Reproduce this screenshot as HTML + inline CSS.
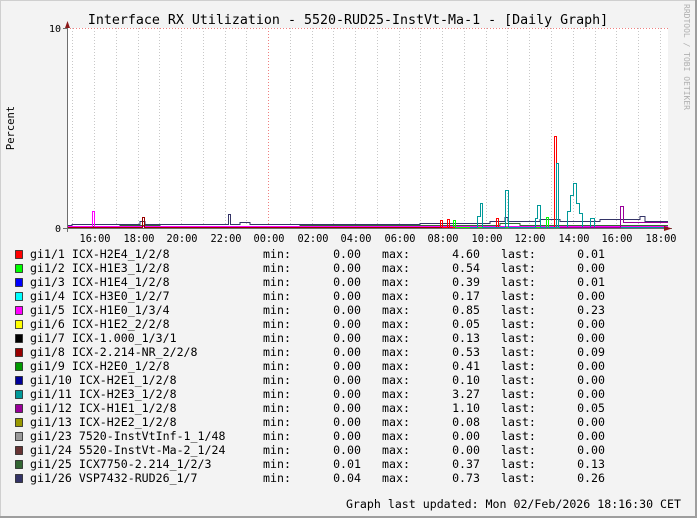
<!DOCTYPE html>
<html><head><meta charset="utf-8"><style>
html,body{margin:0;padding:0;background:#f3f3f3}
svg{display:block}
text{font-family:"DejaVu Sans Mono","Liberation Mono",monospace}
</style></head><body>
<svg width="697" height="518" viewBox="0 0 697 518" xmlns="http://www.w3.org/2000/svg">
<rect x="0" y="0" width="697" height="518" fill="#f3f3f3"/>
<rect x="0.5" y="0.5" width="696" height="517" fill="none" stroke="#cfcfcf"/>
<rect x="695" y="0" width="2" height="518" fill="#9e9e9e"/>
<rect x="0" y="516" width="697" height="2" fill="#9e9e9e"/>
<rect x="67" y="28" width="601" height="200" fill="#ffffff"/>
<g shape-rendering="crispEdges">
<path d="M72.5 28V228M94.5 28V228M116.5 28V228M138.5 28V228M159.5 28V228M181.5 28V228M203.5 28V228M225.5 28V228M246.5 28V228M290.5 28V228M312.5 28V228M333.5 28V228M355.5 28V228M377.5 28V228M399.5 28V228M420.5 28V228M442.5 28V228M464.5 28V228M486.5 28V228M507.5 28V228M529.5 28V228M551.5 28V228M573.5 28V228M595.5 28V228M616.5 28V228M638.5 28V228M660.5 28V228" stroke="#c8c8c8" stroke-dasharray="1,2" stroke-width="1"/>
<path d="M268.5 28V228M67 28.5H668" stroke="#f08080" stroke-dasharray="1,2" stroke-width="1"/>
<polyline fill="none" stroke="#333366" stroke-width="1" points="67,225.5 72,225.5 72,224.5 140,224.5 140,221.5 145,221.5 145,224.5 228.5,224.5 228.5,214.5 230.5,214.5 230.5,224.5 240,224.5 240,222.5 250,222.5 250,224.5 420,224.5 420,223.5 490,223.5 490,221.5 505,221.5 505,217.5 508,217.5 508,221.5 540,221.5 540,219.5 560,219.5 560,221.5 600,221.5 600,219.5 640,219.5 640,216.5 645,216.5 645,221.5 668,221.5"/>
<polyline fill="none" stroke="#336633" stroke-width="1" points="67,226.5 120,226.5 120,225.5 160,225.5 160,226.5 300,226.5 300,225.5 500,225.5 500,223.5 520,223.5 520,225.5 668,225.5"/>
<polyline fill="none" stroke="#ff00ff" stroke-width="1" points="67,226.5 92.5,226.5 92.5,211.5 94.5,211.5 94.5,226.5 668,226.5"/>
<polyline fill="none" stroke="#990000" stroke-width="1" points="67,227.5 142.5,227.5 142.5,217.5 144.5,217.5 144.5,227.5 668,227.5"/>
<polyline fill="none" stroke="#ff0000" stroke-width="1" points="440.5,227.5 440.5,220.5 442.5,220.5 442.5,227.5 447.5,227.5 447.5,219.5 449.5,219.5 449.5,227.5 496.5,227.5 496.5,218.5 498.5,218.5 498.5,227.5 554.5,227.5 554.5,136.5 556.5,136.5 556.5,227.5 668,227.5"/>
<polyline fill="none" stroke="#00ff00" stroke-width="1" points="453.5,227.5 453.5,220.5 455.5,220.5 455.5,227.5 546.5,227.5 546.5,217.5 548.5,217.5 548.5,227.5 668,227.5"/>
<polyline fill="none" stroke="#009999" stroke-width="1" points="470,227.5 477.5,227.5 477.5,216.5 480.5,216.5 480.5,203.5 482.5,203.5 482.5,227.5 505.5,227.5 505.5,190.5 508.5,190.5 508.5,227.5 535.5,227.5 535.5,218.5 537.5,218.5 537.5,205.5 540.5,205.5 540.5,227.5 556.5,227.5 556.5,163.5 558.5,163.5 558.5,227.5 567.5,227.5 567.5,211.5 570.5,211.5 570.5,195.5 573.5,195.5 573.5,183.5 576.5,183.5 576.5,203.5 579.5,203.5 579.5,213.5 582.5,213.5 582.5,227.5 590.5,227.5 590.5,218.5 594.5,218.5 594.5,227.5 668,227.5"/>
<polyline fill="none" stroke="#990099" stroke-width="1" points="560,227.5 620.5,227.5 620.5,206.5 623.5,206.5 623.5,222.5 668,222.5"/>
<line x1="67" y1="228.5" x2="672" y2="228.5" stroke="#6e6e6e"/>
<line x1="67.5" y1="24" x2="67.5" y2="232" stroke="#6e6e6e"/>
<path d="M63 28.5H67M63 228.5H67" stroke="#6e6e6e"/>
</g>
<polygon points="664,226 672,228.5 664,231" fill="#8b1a1a"/>
<polygon points="65,28 67.5,21 70,28" fill="#8b1a1a"/>
<text x="348" y="24" font-size="13.3" text-anchor="middle" fill="#000">Interface RX Utilization - 5520-RUD25-InstVt-Ma-1 - [Daily Graph]</text>
<text x="61" y="32" font-size="10" text-anchor="end">10</text>
<text x="61" y="232" font-size="10" text-anchor="end">0</text>
<text transform="translate(14,128) rotate(-90)" font-size="10.5" text-anchor="middle">Percent</text>
<text transform="translate(684,4) rotate(90)" font-size="8" fill="#b0b0b0">RRDTOOL / TOBI OETIKER</text>
<g font-size="10.3" text-anchor="middle">
<text x="95" y="242">16:00</text><text x="139" y="242">18:00</text><text x="182" y="242">20:00</text><text x="226" y="242">22:00</text><text x="269" y="242">00:00</text><text x="313" y="242">02:00</text><text x="356" y="242">04:00</text><text x="400" y="242">06:00</text><text x="443" y="242">08:00</text><text x="487" y="242">10:00</text><text x="530" y="242">12:00</text><text x="574" y="242">14:00</text><text x="617" y="242">16:00</text><text x="661" y="242">18:00</text>
</g>
<g font-size="11.6">
<g stroke="#222" stroke-width="0.8">
<rect x="15.5" y="250.5" width="7" height="8" fill="#ff0000"/>
<rect x="15.5" y="264.5" width="7" height="8" fill="#00ff00"/>
<rect x="15.5" y="278.5" width="7" height="8" fill="#0000ff"/>
<rect x="15.5" y="292.5" width="7" height="8" fill="#00ffff"/>
<rect x="15.5" y="306.5" width="7" height="8" fill="#ff00ff"/>
<rect x="15.5" y="320.5" width="7" height="8" fill="#ffff00"/>
<rect x="15.5" y="334.5" width="7" height="8" fill="#000000"/>
<rect x="15.5" y="348.5" width="7" height="8" fill="#990000"/>
<rect x="15.5" y="362.5" width="7" height="8" fill="#009900"/>
<rect x="15.5" y="376.5" width="7" height="8" fill="#000099"/>
<rect x="15.5" y="390.5" width="7" height="8" fill="#009999"/>
<rect x="15.5" y="404.5" width="7" height="8" fill="#990099"/>
<rect x="15.5" y="418.5" width="7" height="8" fill="#999900"/>
<rect x="15.5" y="432.5" width="7" height="8" fill="#999999"/>
<rect x="15.5" y="446.5" width="7" height="8" fill="#663333"/>
<rect x="15.5" y="460.5" width="7" height="8" fill="#336633"/>
<rect x="15.5" y="474.5" width="7" height="8" fill="#333366"/>
</g>
<g>
<text x="30" y="258">gi1/1 ICX-H2E4_1/2/8</text>
<text x="30" y="272">gi1/2 ICX-H1E3_1/2/8</text>
<text x="30" y="286">gi1/3 ICX-H1E4_1/2/8</text>
<text x="30" y="300">gi1/4 ICX-H3E0_1/2/7</text>
<text x="30" y="314">gi1/5 ICX-H1E0_1/3/4</text>
<text x="30" y="328">gi1/6 ICX-H1E2_2/2/8</text>
<text x="30" y="342">gi1/7 ICX-1.000_1/3/1</text>
<text x="30" y="356">gi1/8 ICX-2.214-NR_2/2/8</text>
<text x="30" y="370">gi1/9 ICX-H2E0_1/2/8</text>
<text x="30" y="384">gi1/10 ICX-H2E1_1/2/8</text>
<text x="30" y="398">gi1/11 ICX-H2E3_1/2/8</text>
<text x="30" y="412">gi1/12 ICX-H1E1_1/2/8</text>
<text x="30" y="426">gi1/13 ICX-H2E2_1/2/8</text>
<text x="30" y="440">gi1/23 7520-InstVtInf-1_1/48</text>
<text x="30" y="454">gi1/24 5520-InstVt-Ma-2_1/24</text>
<text x="30" y="468">gi1/25 ICX7750-2.214_1/2/3</text>
<text x="30" y="482">gi1/26 VSP7432-RUD26_1/7</text>
</g>
<g>
<text x="263" y="258">min:</text><text x="263" y="272">min:</text><text x="263" y="286">min:</text><text x="263" y="300">min:</text><text x="263" y="314">min:</text><text x="263" y="328">min:</text><text x="263" y="342">min:</text><text x="263" y="356">min:</text><text x="263" y="370">min:</text><text x="263" y="384">min:</text><text x="263" y="398">min:</text><text x="263" y="412">min:</text><text x="263" y="426">min:</text><text x="263" y="440">min:</text><text x="263" y="454">min:</text><text x="263" y="468">min:</text><text x="263" y="482">min:</text>
<text x="382" y="258">max:</text><text x="382" y="272">max:</text><text x="382" y="286">max:</text><text x="382" y="300">max:</text><text x="382" y="314">max:</text><text x="382" y="328">max:</text><text x="382" y="342">max:</text><text x="382" y="356">max:</text><text x="382" y="370">max:</text><text x="382" y="384">max:</text><text x="382" y="398">max:</text><text x="382" y="412">max:</text><text x="382" y="426">max:</text><text x="382" y="440">max:</text><text x="382" y="454">max:</text><text x="382" y="468">max:</text><text x="382" y="482">max:</text>
<text x="501" y="258">last:</text><text x="501" y="272">last:</text><text x="501" y="286">last:</text><text x="501" y="300">last:</text><text x="501" y="314">last:</text><text x="501" y="328">last:</text><text x="501" y="342">last:</text><text x="501" y="356">last:</text><text x="501" y="370">last:</text><text x="501" y="384">last:</text><text x="501" y="398">last:</text><text x="501" y="412">last:</text><text x="501" y="426">last:</text><text x="501" y="440">last:</text><text x="501" y="454">last:</text><text x="501" y="468">last:</text><text x="501" y="482">last:</text>
</g>
<g text-anchor="end">
<text x="361" y="258">0.00</text><text x="361" y="272">0.00</text><text x="361" y="286">0.00</text><text x="361" y="300">0.00</text><text x="361" y="314">0.00</text><text x="361" y="328">0.00</text><text x="361" y="342">0.00</text><text x="361" y="356">0.00</text><text x="361" y="370">0.00</text><text x="361" y="384">0.00</text><text x="361" y="398">0.00</text><text x="361" y="412">0.00</text><text x="361" y="426">0.00</text><text x="361" y="440">0.00</text><text x="361" y="454">0.00</text><text x="361" y="468">0.01</text><text x="361" y="482">0.04</text>
<text x="480" y="258">4.60</text><text x="480" y="272">0.54</text><text x="480" y="286">0.39</text><text x="480" y="300">0.17</text><text x="480" y="314">0.85</text><text x="480" y="328">0.05</text><text x="480" y="342">0.13</text><text x="480" y="356">0.53</text><text x="480" y="370">0.41</text><text x="480" y="384">0.10</text><text x="480" y="398">3.27</text><text x="480" y="412">1.10</text><text x="480" y="426">0.08</text><text x="480" y="440">0.00</text><text x="480" y="454">0.00</text><text x="480" y="468">0.37</text><text x="480" y="482">0.73</text>
<text x="605" y="258">0.01</text><text x="605" y="272">0.00</text><text x="605" y="286">0.01</text><text x="605" y="300">0.00</text><text x="605" y="314">0.23</text><text x="605" y="328">0.00</text><text x="605" y="342">0.00</text><text x="605" y="356">0.09</text><text x="605" y="370">0.00</text><text x="605" y="384">0.00</text><text x="605" y="398">0.00</text><text x="605" y="412">0.05</text><text x="605" y="426">0.00</text><text x="605" y="440">0.00</text><text x="605" y="454">0.00</text><text x="605" y="468">0.13</text><text x="605" y="482">0.26</text>
<text x="681" y="508">Graph last updated: Mon 02/Feb/2026 18:16:30 CET</text>
</g>
</g>
</svg>
</body></html>
